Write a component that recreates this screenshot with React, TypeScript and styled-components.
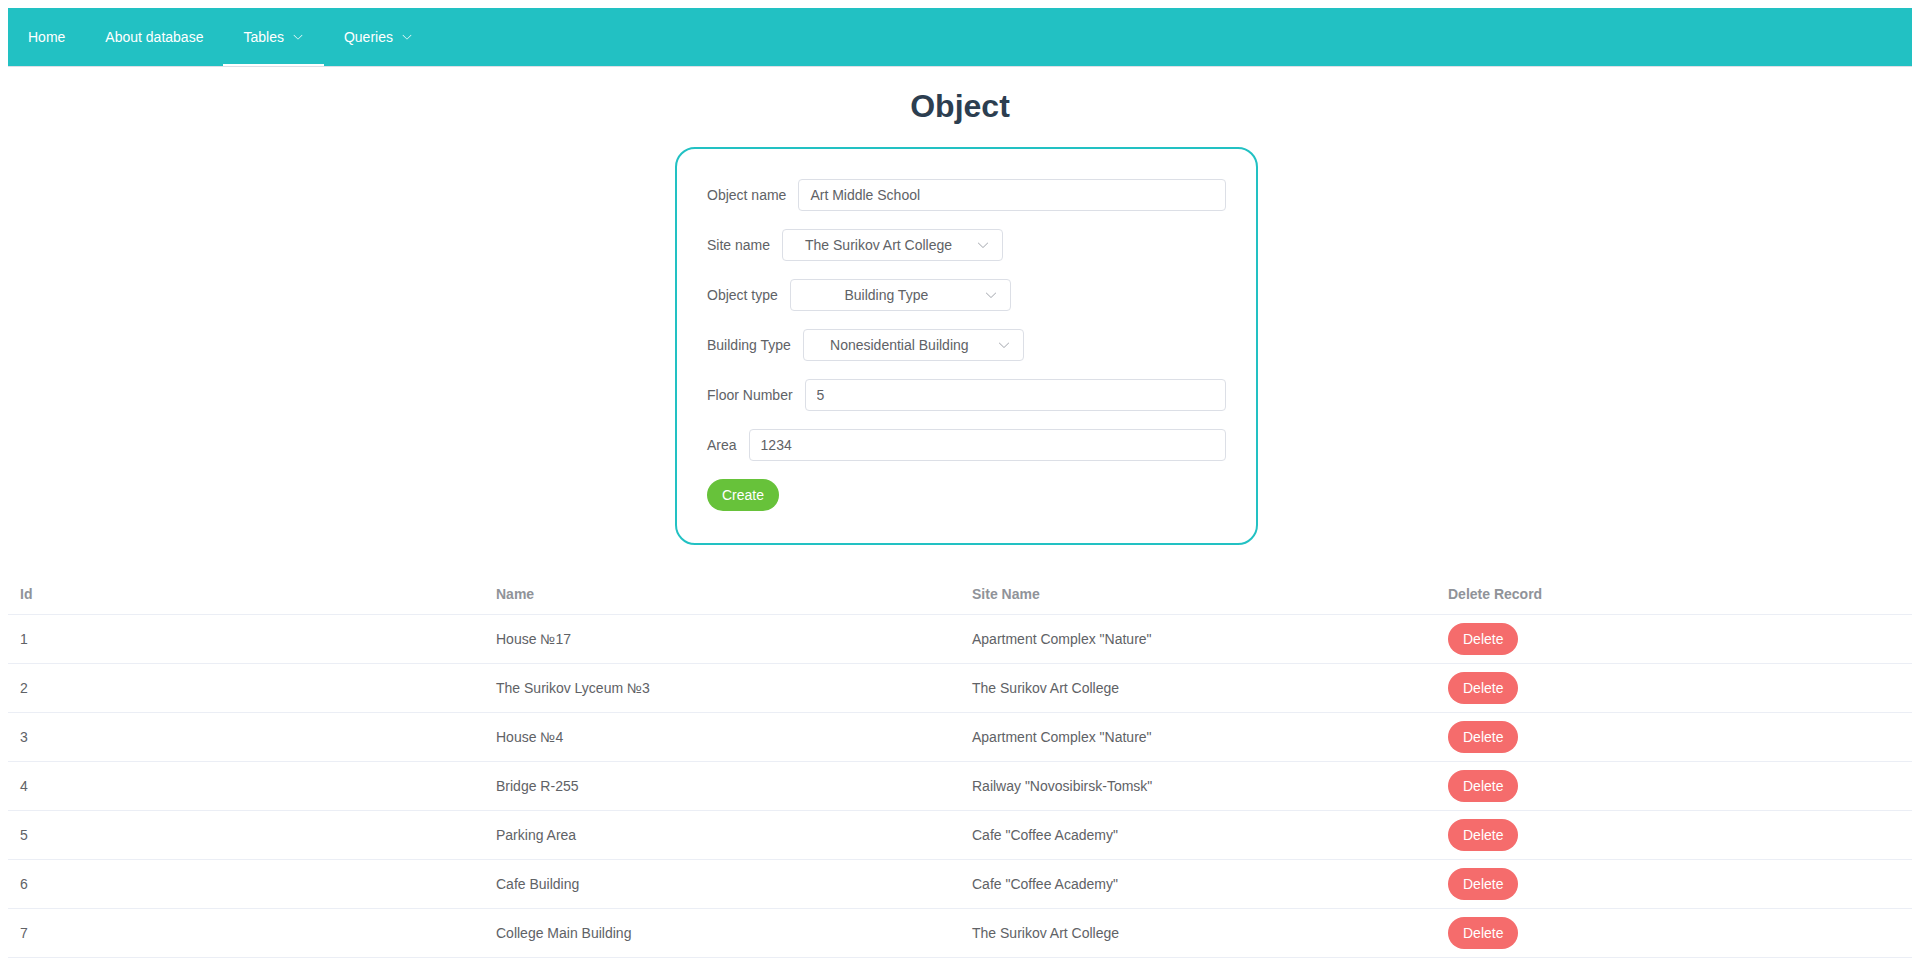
import styled, { createGlobalStyle } from "styled-components";

const GlobalStyle = createGlobalStyle`
  body {
    margin: 8px;
    background: #fff;
    font-family: "Liberation Sans", Arial, Helvetica, sans-serif;
    font-size: 14px;
    color: #606266;
  }
  * {
    box-sizing: border-box;
  }
`

type ObjectRecord = {
    id: number
    name: string
    site: string
}

const records: ObjectRecord[] = [
    {id: 1, name: "House №17", site: "Apartment Complex \"Nature\""},
    {id: 2, name: "The Surikov Lyceum №3", site: "The Surikov Art College"},
    {id: 3, name: "House №4", site: "Apartment Complex \"Nature\""},
    {id: 4, name: "Bridge R-255", site: "Railway \"Novosibirsk-Tomsk\""},
    {id: 5, name: "Parking Area", site: "Cafe \"Coffee Academy\""},
    {id: 6, name: "Cafe Building", site: "Cafe \"Coffee Academy\""},
    {id: 7, name: "College Main Building", site: "The Surikov Art College"},
]

const ArrowDown = (props: { size: number, color: string }) => (
    <svg width={props.size} height={props.size} viewBox="0 0 1024 1024" fill={props.color}>
        <path d="M831.872 340.864 512 652.672 192.128 340.864a30.592 30.592 0 0 0-42.752 0 29.12 29.12 0 0 0 0 41.6L489.664 714.24a32 32 0 0 0 44.672 0l340.288-331.712a29.12 29.12 0 0 0 0-41.728 30.592 30.592 0 0 0-42.752 0z"/>
    </svg>
)

const Select = (props: { value: string }) => (
    <StyledSelect>
        <SelectValue>{props.value}</SelectValue>
        <ArrowDown size={14} color={"#a8abb2"}/>
    </StyledSelect>
)

export default function App() {
    return (
        <>
            <GlobalStyle/>
            <Menu>
                <MenuItem>Home</MenuItem>
                <MenuItem>About database</MenuItem>
                <MenuItem active>
                    Tables
                    <MenuArrow><ArrowDown size={12} color={"#fff"}/></MenuArrow>
                </MenuItem>
                <MenuItem>
                    Queries
                    <MenuArrow><ArrowDown size={12} color={"#fff"}/></MenuArrow>
                </MenuItem>
            </Menu>

            <FormSection>
                <Title>Object</Title>
                <Card>
                    <FormItem>
                        <Label>Object name</Label>
                        <Input defaultValue={"Art Middle School"}/>
                    </FormItem>
                    <FormItem>
                        <Label>Site name</Label>
                        <Select value={"The Surikov Art College"}/>
                    </FormItem>
                    <FormItem>
                        <Label>Object type</Label>
                        <Select value={"Building Type"}/>
                    </FormItem>
                    <FormItem>
                        <Label>Building Type</Label>
                        <Select value={"Nonesidential Building"}/>
                    </FormItem>
                    <FormItem>
                        <Label>Floor Number</Label>
                        <Input defaultValue={"5"}/>
                    </FormItem>
                    <FormItem>
                        <Label>Area</Label>
                        <Input defaultValue={"1234"}/>
                    </FormItem>
                    <FormItem>
                        <RoundButton color={"#67c23a"}>Create</RoundButton>
                    </FormItem>
                </Card>
            </FormSection>

            <Table>
                <thead>
                <tr>
                    <HeadCell>Id</HeadCell>
                    <HeadCell>Name</HeadCell>
                    <HeadCell>Site Name</HeadCell>
                    <HeadCell>Delete Record</HeadCell>
                </tr>
                </thead>
                <tbody>
                {records.map(r => (
                    <tr key={r.id}>
                        <Cell>{r.id}</Cell>
                        <Cell>{r.name}</Cell>
                        <Cell>{r.site}</Cell>
                        <Cell><RoundButton color={"#f56c6c"}>Delete</RoundButton></Cell>
                    </tr>
                ))}
                </tbody>
            </Table>
        </>
    );
}

const Menu = styled.nav`
  display: flex;
  height: 59px;
  background-color: #22c1c3;
  border-bottom: 1px solid #dcdfe6;
`

const MenuItem = styled.div<{ active?: boolean }>`
  display: flex;
  align-items: center;
  height: 100%;
  padding: 0 20px;
  color: #fff;
  font-size: 14px;
  cursor: pointer;
  box-shadow: ${props => props.active ? "inset 0 -2px 0 #fff" : "none"};
`

const MenuArrow = styled.span`
  display: flex;
  margin-left: 8px;
`

const FormSection = styled.section`
  display: flex;
  flex-direction: column;
  align-items: center;
`

const Title = styled.h1`
  font-size: 32px;
  font-weight: 700;
  color: #2c3e50;
  margin: 21px 0 22px;
`

const Card = styled.div`
  width: 583px;
  margin-left: 13px;
  border: 2px solid #22c1c3;
  border-radius: 20px;
  padding: 30px 30px 32px;
  display: flex;
  flex-direction: column;
  gap: 18px;
`

const FormItem = styled.div`
  display: flex;
  align-items: center;
  height: 32px;
`

const Label = styled.label`
  padding-right: 12px;
  font-size: 14px;
  line-height: 32px;
  color: #606266;
  white-space: nowrap;
`

const Input = styled.input`
  flex: 1;
  height: 32px;
  padding: 0 11px;
  border: 1px solid #dcdfe6;
  border-radius: 4px;
  font-family: inherit;
  font-size: 14px;
  color: #606266;
  outline: none;
`

const StyledSelect = styled.div`
  display: flex;
  align-items: center;
  width: 221px;
  height: 32px;
  padding: 0 12px 0 11px;
  border: 1px solid #dcdfe6;
  border-radius: 4px;
  cursor: pointer;
`

const SelectValue = styled.span`
  flex: 1;
  margin-right: 13px;
  text-align: center;
  font-size: 14px;
  color: #606266;
  white-space: nowrap;
`

const RoundButton = styled.button<{ color: string }>`
  height: 32px;
  padding: 0 15px;
  border: none;
  border-radius: 20px;
  background-color: ${props => props.color};
  color: #fff;
  font-family: inherit;
  font-size: 14px;
  cursor: pointer;
`

const Table = styled.table`
  width: 100%;
  margin-top: 30px;
  border-collapse: collapse;
  table-layout: fixed;
  font-size: 14px;
`

const HeadCell = styled.th`
  padding: 8px 12px;
  line-height: 23px;
  text-align: left;
  font-weight: 700;
  color: #909399;
  border-bottom: 1px solid #ebeef5;
`

const Cell = styled.td`
  padding: 8px 12px;
  line-height: 23px;
  color: #606266;
  border-bottom: 1px solid #ebeef5;
`
